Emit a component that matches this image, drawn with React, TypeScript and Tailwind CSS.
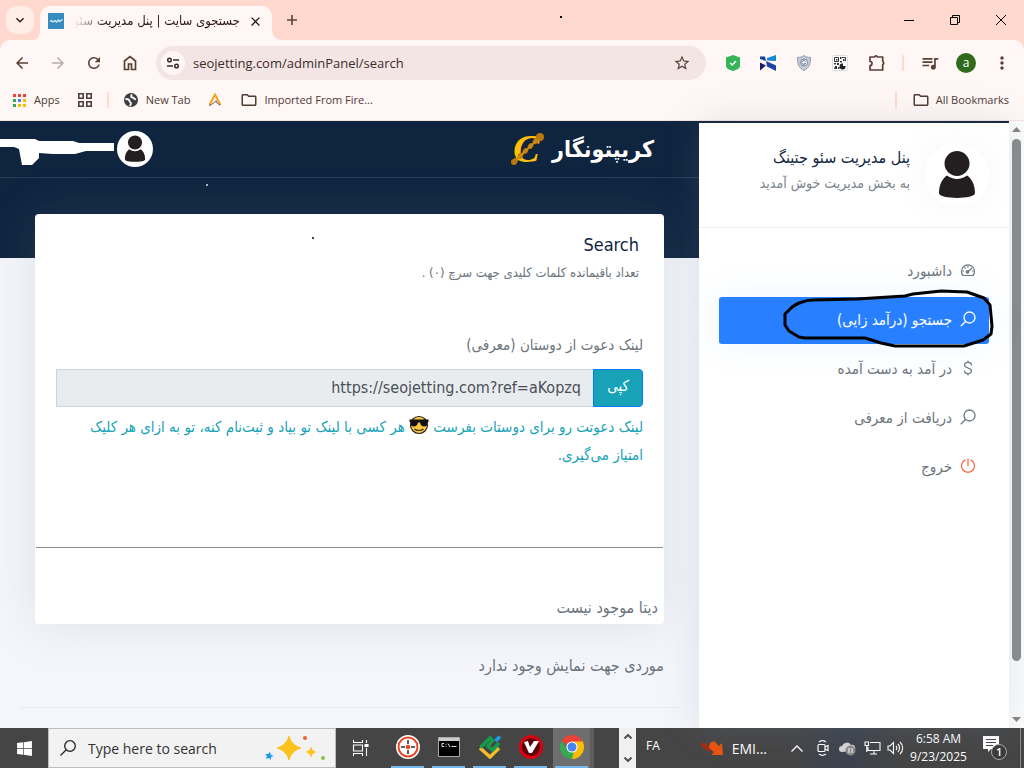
import type { ReactNode } from "react";
import {
  MdArrowBack,
  MdArrowForward,
  MdClose,
  MdKeyboardArrowDown,
  MdMoreVert,
  MdOutlineFolder,
  MdQueueMusic,
  MdRefresh,
  MdStarBorder,
} from "react-icons/md";
import { FaWindows } from "react-icons/fa";

const persian = "font-['DejaVu_Sans_Condensed','DejaVu_Sans',sans-serif]";

function WindowControls() {
  return (
    <div className="ml-auto flex h-full items-center">
      <button aria-label="Minimize" className="flex h-full w-[46px] items-center justify-center">
        <svg width="10" height="10" viewBox="0 0 10 10" stroke="#000" fill="none"><path d="M0 5.5h10" /></svg>
      </button>
      <button aria-label="Restore" className="flex h-full w-[46px] items-center justify-center">
        <svg width="10" height="10" viewBox="0 0 10 10" stroke="#000" fill="none"><path d="M.5 2.5h7v7h-7zM2.5 2.5v-2h7v7h-2" /></svg>
      </button>
      <button aria-label="Close" className="flex h-full w-[46px] items-center justify-center">
        <svg width="10" height="10" viewBox="0 0 10 10" stroke="#000" fill="none"><path d="M0 0l10 10M10 0L0 10" /></svg>
      </button>
    </div>
  );
}

function TabStrip() {
  return (
    <div className="relative flex h-10 items-center bg-[#ffd9ce]">
      <button aria-label="Search tabs" className="ml-1.5 flex size-7 items-center justify-center rounded-[10px] bg-[#ffede8] text-[#2b1712]">
        <MdKeyboardArrowDown size={16} />
      </button>
      <svg className="self-end" width="6" height="10" viewBox="0 0 6 10"><path d="M6 0v10H0c4 0 6-4 6-10" fill="#fff7f5" /></svg>
      <div className="flex h-[34px] w-[232px] items-center self-end rounded-t-[10px] bg-[#fff7f5] px-2 pb-2 pt-1">
        <svg width="16" height="16" viewBox="0 0 16 16" className="shrink-0">
          <path d="M0 0h16v16H0z" fill="#378cbf" />
          <path d="M2 8.500l1.500-1 1.500 1.500 2-1.500 1.500 1.500 2-2 1 1.500 3-2" stroke="#d9ecf5" strokeWidth="1.300" fill="none" />
        </svg>
        <div dir="rtl" className={`ml-2.5 w-[166px] overflow-hidden whitespace-nowrap text-[13px] leading-5 text-[#2b1712] [mask-image:linear-gradient(to_right,transparent,#000_32px)] ${persian}`}>
          جستجوی سایت | پنل مدیریت سئو
        </div>
        <button aria-label="Close tab" className="ml-2 text-[#2b1712]"><MdClose size={15} /></button>
      </div>
      <svg className="self-end" width="10" height="10" viewBox="0 0 10 10"><path d="M0 0v10h10C4 10 0 6 0 0" fill="#fff7f5" /></svg>
      <button aria-label="New tab" className="ml-1 text-[#5b4039]">
        <svg width="12" height="12" viewBox="0 0 12 12" stroke="currentColor" strokeWidth="1.600"><path d="M6 1v10M1 6h10" /></svg>
      </button>
      <span className="absolute left-[560px] top-4 size-0.5 bg-black" />
      <WindowControls />
    </div>
  );
}

function Extensions() {
  return (
    <div className="ml-5 flex items-center text-[#5b3f37]">
      <svg width="14" height="16" viewBox="0 0 14 16"><path d="M7 0l7 2.500V11c0 2-3 4-7 5-4-1-7-3-7-5V2.500z" fill="#35b558" /><path d="M4 8l2.200 2L10 6" stroke="#fff" strokeWidth="1.600" fill="none" /></svg>
      <svg className="ml-5" width="16" height="16" viewBox="0 0 16 16">
        <path d="M0 1.500h5L6 6l-6-2z" fill="#1b3fa0" />
        <path d="M16 0v6L7 5.500V3z" fill="#1487d8" />
        <path d="M6 6l10 4.500V16L7 11.500z" fill="#20429f" />
        <path d="M0 7.500l6 3-6 5z" fill="#1b1f6b" />
      </svg>
      <svg className="ml-5" width="16" height="16" viewBox="0 0 16 16">
        <path d="M8 .5c2 1.500 4 2 6.500 2 0 6-1 10.500-6.500 13C2.500 13 1.500 8.500 1.500 2.500 4 2.500 6 2 8 .5z" fill="#c5cbd5" stroke="#939dac" />
        <circle cx="8" cy="7.500" r="3.500" fill="#e9ecf2" stroke="#7f8ba2" /><path d="M9.500 6.500a2 2 0 1 0 0 2H8" stroke="#7f8ba2" fill="none" />
      </svg>
      <svg className="ml-5" width="16" height="16" viewBox="0 0 16 16">
        <rect x=".5" y=".5" width="15" height="15" rx="1.500" fill="#fff" stroke="#ddd" />
        <path d="M2.500 2.500h4v4h-4zM10 2.500h3.500v3.500" fill="none" stroke="#333" />
        <path d="M4 4h1.500v1.500H4zM8 2h1.500v2H8zM11 4h1.500v2H11zM8 6h2v1.500H8zM2 8h2v1.500H2zM5 8h2v2H5zM3 11h2v3H2zM6 12h1.500v2H6z" fill="#333" />
        <path d="M11 8.500V11h2.500A3 3 0 1 1 11 8.500z" fill="#222" />
      </svg>
      <button aria-label="Extensions" className="ml-5">
        <svg width="18" height="18" viewBox="0 0 18 18" fill="none" stroke="currentColor" strokeWidth="1.700" strokeLinejoin="round">
          <path d="M2 3h4.500a1.600 1.600 0 0 1 3 0h5.200v4.500a1.600 1.600 0 0 1 0 3V16H2v-4.500a2 2 0 0 0 0-4z" />
        </svg>
      </button>
      <span className="ml-4 h-4 w-0.5 rounded bg-[#ffd9ce]" />
      <button aria-label="Media controls" className="ml-4"><MdQueueMusic size={20} /></button>
      <button className="ml-4 flex size-5 items-center justify-center rounded-full bg-[#2f6a1d] text-[12px] leading-none text-white">a</button>
      <button aria-label="Menu" className="ml-4 mr-3"><MdMoreVert size={20} /></button>
    </div>
  );
}

function Toolbar() {
  return (
    <div className="flex h-[46px] items-center rounded-t-[10px] bg-[#fff7f5] pl-[13px] text-[#5b3f37]">
      <button aria-label="Back"><MdArrowBack size={18} /></button>
      <button aria-label="Forward" className="ml-[18px] text-[#bcaca8]"><MdArrowForward size={18} /></button>
      <button aria-label="Reload" className="ml-[18px]"><MdRefresh size={18} /></button>
      <button aria-label="Home" className="ml-[18px]">
        <svg width="18" height="18" viewBox="0 0 18 18" fill="none" stroke="currentColor" strokeWidth="1.700"><path d="M3.500 7L9 2.500 14.500 7v8.500h-4V10h-3v5.500h-4z" /></svg>
      </button>
      <div className="ml-[17px] flex h-[34px] flex-1 items-center rounded-full bg-[#f2e5e4] pl-[5px] pr-[15px]">
        <button aria-label="Site information" className="flex size-6 items-center justify-center rounded-full bg-[#fff7f5]">
          <svg width="14" height="14" viewBox="0 0 14 14" fill="none" stroke="#3b2823" strokeWidth="1.500"><circle cx="3.500" cy="4" r="1.800" /><path d="M7 4h6M1 10h6" /><circle cx="10.500" cy="10" r="1.800" /></svg>
        </button>
        <input aria-label="Address" readOnly value="seojetting.com/adminPanel/search" className="ml-2 min-w-0 flex-1 bg-transparent text-[13px] leading-5 text-[#3b2d2a] outline-none" />
        <button aria-label="Bookmark this tab"><MdStarBorder size={18} /></button>
      </div>
      <Extensions />
    </div>
  );
}

const appDots = ["#ea4335", "#ea4335", "#ea4335", "#34a853", "#4285f4", "#fbbc04", "#34a853", "#fbbc04", "#fbbc04"];

function Bookmarks() {
  return (
    <nav className="flex h-[35px] items-center border-b border-[#f3e3df] bg-[#fff7f5] pb-1.5 pl-[13px] pr-[15px] text-[11px] text-[#4f3a35]">
      <a href="#apps" className="flex items-center gap-2">
        <svg width="13" height="13" viewBox="0 0 13 13">{appDots.map((c, i) => <rect key={i} x={(i % 3) * 5} y={Math.floor(i / 3) * 5} width="3" height="3" fill={c} />)}</svg>
        Apps
      </a>
      <svg className="ml-[18px]" width="14" height="14" viewBox="0 0 14 14" fill="none" stroke="currentColor" strokeWidth="1.600"><path d="M.8.8h4.400v4.400H.8zM8.800.8h4.400v4.400H8.800zM.8 8.800h4.400v4.400H.8zM8.800 8.800h4.400v4.400H8.800z" /></svg>
      <span className="ml-[15px] h-4 w-0.5 rounded bg-[#ffd9ce]" />
      <a href="#new" className="ml-[15px] flex items-center gap-2">
        <svg width="14" height="14" viewBox="0 0 14 14"><circle cx="7" cy="7" r="7" fill="#3c4043" /><path d="M1.500 6c2 0 4 .5 4 2s1.500 1 1.500 2.500L6 13M8 1.500C6.500 3 7 4.500 8.500 4.500S10 6 12 6.500" stroke="#fff7f5" strokeWidth="1.800" fill="none" /></svg>
        New Tab
      </a>
      <svg className="ml-[18px]" width="14" height="14" viewBox="0 0 14 14" fill="none"><path d="M1.500 12L7 1.500 12.500 12" stroke="#f9a11b" strokeWidth="2" /><path d="M1 12.500c4-1 5-4 8-4.500M8 9l4 3" stroke="#5c5a6b" /></svg>
      <a href="#imported" className="ml-[18px] flex items-center gap-1.5"><MdOutlineFolder size={18} />Imported From Fire...</a>
      <span className="ml-auto h-4 w-0.5 rounded bg-[#ffd9ce]" />
      <a href="#all" className="ml-[15px] flex items-center gap-1.5"><MdOutlineFolder size={18} />All Bookmarks</a>
    </nav>
  );
}

function Avatar({ size }: { size: number }) {
  return (
    <svg width={size} height={size} viewBox="0 0 64 64" role="img" aria-label="user">
      <circle cx="32" cy="32" r="32" fill="#fff" />
      <circle cx="32" cy="20.500" r="12.500" fill="#231f20" />
      <path d="M22 32.500c6 4.500 14 4.500 20 0 5 3 8 10 8 17.500 0 6.500-36 6.500-36 0 0-7.500 3-14.500 8-17.500z" fill="#231f20" />
    </svg>
  );
}

function Logo() {
  return (
    <a href="#home" dir="ltr" className="flex items-center gap-1.5 text-white">
      <svg width="36" height="48" viewBox="0 0 36 48">
        <text x="3" y="37" fontSize="40" fontWeight="700" fontStyle="italic" fontFamily="Liberation Serif" fill="#fdbf07">C</text>
        <path d="M5 36L30 12" stroke="#b9780d" strokeWidth="5" strokeLinecap="round" strokeDasharray="1 6" />
        <path d="M5 36L30 12" stroke="#d08c12" strokeWidth="2" />
        <circle cx="30" cy="12" r="4" fill="#b9780d" /><circle cx="4" cy="37" r="3" fill="#b9780d" />
      </svg>
      <span dir="rtl" className={`text-[23px] font-bold leading-8 ${persian}`}>کریپتونگار</span>
    </a>
  );
}

function CoolFace() {
  return (
    <svg className="inline-block align-[-3px]" width="20" height="20" viewBox="0 0 20 20" role="img" aria-label="cool face">
      <circle cx="10" cy="10" r="8.500" fill="#ffc83d" stroke="#222" strokeWidth="1.200" />
      <path d="M.5 4.500h19v2.500l-1 .5c0 3-1.500 4-3.500 4s-3.500-1.500-4-4H9c-.5 2.500-2 4-4 4s-3.500-1-3.500-4l-1-.5z" fill="#111" />
      <path d="M5.500 14c2.500 2 6.500 2 9 0" stroke="#222" strokeWidth="1.200" fill="none" />
    </svg>
  );
}

function MainPanel() {
  return (
    <main className="relative min-w-0 flex-1 overflow-hidden bg-[#f5f6fb]">
      <div className="h-[137px] bg-[#0f243f]">
        <header className="flex h-[57px] items-center border-b border-[#2a3b57] pr-[45px]">
          <svg width="117" height="34" viewBox="0 0 117 34" fill="#fff"><path d="M0 7h35l4 2h34l6 2h35v8H86l-11 3H53l-14-1v5l-7 7H22l-3-16-5-2H0z" /></svg>
          <Avatar size={36} />
          <div className="ml-auto"><Logo /></div>
        </header>
      </div>
      <section dir="rtl" className={`relative mx-[35px] -mt-11 h-[410px] rounded bg-white text-[#6c757d] shadow-[0_0_50px_rgba(120,135,160,0.18)] ${persian}`}>
        <div className="px-[25px] pt-[19px]">
          <h1 className="text-[18px] leading-6 text-[#0f243f]">Search</h1>
          <p className="mt-1 text-[13px] leading-6">تعداد باقیمانده کلمات کلیدی جهت سرچ (۰) .</p>
        </div>
        <div className="px-[21px] pt-12 text-[15px]">
          <label htmlFor="invite" className="block leading-6">لینک دعوت از دوستان (معرفی)</label>
          <div className="mt-3 flex h-[38px]">
            <button className="w-[50px] rounded-r border border-[#007bff] bg-[#17a2b8] pb-1 text-white">کپی</button>
            <input id="invite" dir="ltr" readOnly value="https://seojetting.com?ref=aKopzq" className="min-w-0 flex-1 border border-r-0 border-[#ced4da] bg-[#e9ecef] px-3 text-right text-[16px] text-[#495057] outline-none" />
          </div>
          <p className="mt-1.5 leading-7 text-[#17a2b8]">
            لینک دعوتت رو برای دوستات بفرست <CoolFace /> هر کسی با لینک تو بیاد و ثبت‌نام کنه، تو به ازای هر کلیک
            <br />
            امتیاز می‌گیری.
          </p>
        </div>
        <hr className="mx-px mt-[78px] border-[#8c8c8c]" />
        <p className="pr-1.5 pt-12 text-[16px] leading-6">دیتا موجود نیست</p>
      </section>
      <p dir="rtl" className={`mr-[35px] mt-[30px] text-[16px] leading-6 text-[#6c757d] ${persian}`}>موردی جهت نمایش وجود ندارد</p>
      <hr className="mx-5 mt-[29px] border-[#e9eaf0]" />
      <span className="absolute left-[206px] top-[63px] size-0.5 bg-[#a9b2bf]" />
      <span className="absolute left-[312px] top-[116px] size-0.5 bg-[#444]" />
    </main>
  );
}

const searchIcon = <svg width="16" height="16" viewBox="0 0 16 16" fill="none" stroke="currentColor" strokeWidth="1.300"><circle cx="9.500" cy="6.500" r="5.500" /><path d="M5.500 10.500L.8 15.200" /></svg>;

const menu: { label: string; icon: ReactNode; active?: boolean; danger?: boolean }[] = [
  {
    label: "داشبورد",
    icon: <svg width="16" height="16" viewBox="0 0 16 16" fill="none" stroke="currentColor" strokeWidth="1.200"><path d="M3 13.500a6.500 6.500 0 1 1 10 0zM4 9H2.500M4.500 5.500l1 1M8 4v1.500M13.500 9H12" /><path d="M7 10.500L12 6" /><circle cx="7.500" cy="9.800" r="1.300" /></svg>,
  },
  { label: "جستجو (درآمد زایی)", icon: searchIcon, active: true },
  {
    label: "در آمد به دست آمده",
    icon: <svg width="16" height="16" viewBox="0 0 16 16" fill="none" stroke="currentColor" strokeWidth="1.200"><path d="M11.500 5.500c0-4-7-4-7-.5s7 2.500 7 6-7 3.500-7-.5M8 .5v2M8 13.500v2" /></svg>,
  },
  { label: "دریافت از معرفی", icon: searchIcon },
  {
    label: "خروج",
    danger: true,
    icon: <svg width="16" height="16" viewBox="0 0 16 16" fill="none" stroke="currentColor" strokeWidth="1.300"><path d="M5.500 1.800a6.500 6.500 0 1 0 5 0M8 .5V8" /></svg>,
  },
];

function Sidebar() {
  return (
    <aside dir="rtl" className={`relative mt-0.5 w-[310px] shrink-0 bg-white shadow-[0_0_35px_rgba(120,135,160,0.2)] ${persian}`}>
      <div className="flex h-[105px] items-center border-b border-[#f1f1f3] pr-5">
        <div className="rounded-full shadow-[0_0_35px_rgba(120,135,160,0.08)]"><Avatar size={64} /></div>
        <div className="pb-2.5 pr-[15px]">
          <h2 className="text-[16px] leading-[26px] text-[#12263f]">پنل مدیریت سئو جتینگ</h2>
          <p className="text-[14px] leading-6 text-[#7b838c]">به بخش مدیریت خوش آمدید</p>
        </div>
      </div>
      <nav className="relative mx-5 mt-5 flex flex-col gap-0.5">
        {menu.map((item) => (
          <a
            key={item.label}
            href="#menu"
            className={`flex h-[47px] items-center gap-2 rounded-[3px] px-[13px] text-[15px] ${item.active ? "bg-[#287fff] text-white shadow-[0_0_40px_rgba(40,127,255,0.08)]" : "text-[#6c757d]"}`}
          >
            <span className={`pb-1 ${item.danger ? "text-[#f96a4b]" : ""}`}>{item.icon}</span>
            {item.label}
          </a>
        ))}
        {/* hand-drawn loop round the active entry */}
        <svg className="absolute -right-1.5 top-[38px] overflow-visible" width="214" height="60" viewBox="0 0 214 60" fill="none" stroke="#000" strokeWidth="3" strokeLinejoin="round">
          <path d="M76 13L32 14C24 14 14 18 10 22L4 28V39L8 45 18 51 24 52H84L100 57 114 60H183L202 54 210 48 211 40 209 19 203 12 186 6 160 5 132 8 124 10z" />
        </svg>
      </nav>
    </aside>
  );
}

function ScrollBar() {
  return (
    <div className="flex w-[15px] shrink-0 flex-col items-center justify-between bg-[#fcfcfc] pb-1.5 pt-1.5">
      <svg width="9" height="5" viewBox="0 0 9 5" fill="#858585"><path d="M0 5l4.500-5L9 5z" /></svg>
      <div className="mb-14 mt-[7px] w-[9px] flex-1 rounded-full bg-[#8b8b8b]" />
      <svg width="9" height="5" viewBox="0 0 9 5" fill="#858585"><path d="M0 0l4.500 5L9 0z" /></svg>
    </div>
  );
}

const apps: { name: string; icon: ReactNode }[] = [
  {
    name: "Snipping target",
    icon: <svg width="24" height="24" viewBox="0 0 24 24"><circle cx="12" cy="12" r="12" fill="#fff" /><circle cx="12" cy="12" r="9.500" fill="none" stroke="#e8472b" strokeWidth="2" /><path d="M12 5v4M12 15v4M5 12h4M15 12h4" stroke="#333" strokeWidth="1.600" /><circle cx="12" cy="12" r="2.200" fill="#f0441f" /></svg>,
  },
  {
    name: "Command Prompt",
    icon: <svg width="22" height="20" viewBox="0 0 22 20"><path d="M.5.5h21v19H.5z" fill="#000" stroke="#aaa" /><path d="M1 1h20v3H1z" fill="#c9ced3" /><path d="M6 6.500H4v3h2M8 7v.8M8 9v.8M10 6.500l2 3.500M13.500 9.500h5" stroke="#ddd" fill="none" /></svg>,
  },
  {
    name: "LiteFinance",
    icon: <svg width="24" height="24" viewBox="0 0 24 24" fill="none"><path d="M2 13l10 9 9-9" stroke="#f2bd2b" strokeWidth="3.500" /><path d="M2.500 12.500L12 3l2.500 2.500L10 11l4.500 4 6.500-7" stroke="#159b4c" strokeWidth="3.500" /><path d="M17.500 6L22 1.500" stroke="#1c9be6" strokeWidth="3.500" /></svg>,
  },
  {
    name: "V client",
    icon: <svg width="24" height="24" viewBox="0 0 24 24"><circle cx="12" cy="12" r="12" fill="#d90010" /><circle cx="12" cy="12" r="9" fill="#5b0008" /><path d="M5 7l4-1 2 6 4-6h5l-7 12H10z" fill="#fff" /></svg>,
  },
  {
    name: "Google Chrome",
    icon: (
      <svg width="24" height="24" viewBox="0 0 24 24">
        <path d="M12 12L1.600 6a12 12 0 0 1 20.800 0z" fill="#ea4335" />
        <path d="M12 12L22.400 6A12 12 0 0 1 12 24z" fill="#fbbc04" />
        <path d="M12 24A12 12 0 0 1 1.600 6L7 15l8 3z" fill="#34a853" />
        <path d="M12 6.500h10.700L17 15l-5 9 2-8z" fill="#fbbc04" />
        <circle cx="12" cy="12" r="5.600" fill="#fff" /><circle cx="12" cy="12" r="4.500" fill="#4285f4" />
      </svg>
    ),
  },
];

function Taskbar() {
  return (
    <footer className="flex h-10 shrink-0 items-stretch bg-[#454545] text-[12px] text-white">
      <button aria-label="Start" className="flex w-12 items-center justify-center"><FaWindows size={17} /></button>
      <label className="flex w-[288px] items-center border border-[#bdbdbd] bg-[#f2f2f2] pl-[11px] pr-2.5 text-[#222]">
        <svg className="shrink-0" width="16" height="16" viewBox="0 0 16 16" fill="none" stroke="currentColor" strokeWidth="1.300"><circle cx="10" cy="6" r="5.300" /><path d="M6 10L.5 15.500" /></svg>
        <input placeholder="Type here to search" className="ml-3 min-w-0 flex-1 bg-transparent text-[14px] outline-none placeholder:text-[#333]" />
        <svg className="shrink-0" width="60" height="26" viewBox="0 0 60 26">
          <path d="M24 1c1.500 6 5.500 10 12 12-6.500 2-10.500 6-12 12-1.500-6-5.500-10-12-12 6.500-2 10.500-6 12-12z" fill="#fcc21b" stroke="#fcc21b" strokeLinejoin="round" />
          <path d="M46 11c1 4 2 5 6 6-4 1-5 2-6 6-1-4-2-5-6-6 4-1 5-2 6-6z" fill="#fcc21b" />
          <path d="M5 17l1 3 3 1-3 1v3l-2-2-3 1 1-3-2-2h3z" fill="#1b9be8" />
          <circle cx="40" cy="3" r="2" fill="#f0622d" /><circle cx="58" cy="23" r="2" fill="#86c440" />
        </svg>
      </label>
      <button aria-label="Task View" className="flex w-12 items-center justify-center">
        <svg width="17" height="16" viewBox="0 0 17 16" fill="none" stroke="#fff" strokeWidth="1.100"><path d="M1.500 0v2.500h9V0M1.500 5h9v6h-9zM1.500 16v-2.500h9V16M14.500 0v3M14.500 8v8" /><path d="M13 4.500h3v2h-3z" fill="#fff" /></svg>
      </button>
      <div className="flex pl-[5px]">
        {apps.map((app, i) => (
          <button key={app.name} aria-label={app.name} className={`flex w-[41px] items-center justify-center border-r-4 ${i === 4 ? "border-[#5d5d5d] bg-[#6e6e6e]" : "border-transparent"}`}>
            <span className="flex h-full w-[33px] items-center justify-center border-b-2 border-[#76b9ed]">{app.icon}</span>
          </button>
        ))}
      </div>
      <div className="ml-[25px] flex w-[17px] flex-col items-center justify-between bg-[#f0f0f0] py-1.5">
        <svg width="8" height="5" viewBox="0 0 8 5" fill="none" stroke="#505050" strokeWidth="2"><path d="M.5 4.500L4 1l3.500 3.500" /></svg>
        <svg width="8" height="5" viewBox="0 0 8 5" fill="none" stroke="#505050" strokeWidth="2"><path d="M.5.5L4 4 7.500.5" /></svg>
      </div>
      <button className="ml-2.5 pb-1">FA</button>
      <button className="ml-auto flex items-center gap-2 text-[14px]">
        <svg width="24" height="14" viewBox="0 0 24 14"><path d="M0 4l4-3 4 4 5-4 2 5-6 5z" fill="#a32c12" /><path d="M10 2l4-2 5 5 3-3 1 12H11l3-3-5-4z" fill="#e8540f" /></svg>
        EMI...
      </button>
      <div className="ml-5 flex items-center bg-linear-to-r from-[#454545] via-[#3c434e] to-[#454545] pl-1">
        <svg width="12" height="7" viewBox="0 0 12 7" fill="none" stroke="#fff" strokeWidth="1.300"><path d="M.5 6.500L6 1l5.500 5.500" /></svg>
        <svg className="ml-3.5" width="12" height="16" viewBox="0 0 12 16" fill="none" stroke="#fff" strokeWidth="1.200"><rect x="1" y="4.500" width="7" height="7" rx="1" /><path d="M8 7l3-1.500v5L8 9M2 2c2-1.500 5-1.500 7 0M2 14c2 1.500 5 1.500 7 0" /></svg>
        <svg className="ml-2.5" width="17" height="16" viewBox="0 0 17 16"><path d="M3 12a3 3 0 0 1 0-6 5 5 0 0 1 9-1 3 3 0 0 1 2 6z" fill="#d4d4d4" /><circle cx="11.500" cy="10.500" r="5" fill="#8a8a8a" /><path d="M10 8v5M13 8v5" stroke="#fff" /></svg>
        <svg className="ml-2" width="17" height="14" viewBox="0 0 17 14" fill="none" stroke="#fff" strokeWidth="1.100"><path d="M6 1.500h10v8H4V6M10 9.500V13M6 13h7M1 1h3.500v3.500H1zM2.800 4.500V11" /></svg>
        <svg className="ml-1.5" width="17" height="14" viewBox="0 0 17 14" fill="none" stroke="#fff" strokeWidth="1.100"><path d="M1 5v4h2l3.500 3.500v-11L3 5zM9 5c1 1 1 3 0 4M11 3c2 2 2 6 0 8M13 1c3.500 3 3.500 9 0 12" /></svg>
      </div>
      <button className="ml-1.5 w-[57px] whitespace-nowrap text-center leading-[18px]">6:58 AM<br />9/23/2025</button>
      <button aria-label="1 new notification" className="ml-4 flex items-center">
        <svg width="25" height="26" viewBox="0 0 25 26">
          <path d="M0 1h16v13H8l-3 3v-3H0z" fill="#fff" /><path d="M3 4.500h10M3 7.500h10M3 10.500h7" stroke="#454545" />
          <circle cx="16" cy="17" r="7.500" fill="#3b3b3b" stroke="#aaa" /><text x="13" y="21" fontSize="11" fontWeight="600" fill="#fff" fontFamily="Open Sans">1</text>
        </svg>
      </button>
      <span className="ml-3 mr-[3px] w-px bg-[#8a8a8a]" />
    </footer>
  );
}

export default function App() {
  return (
    <div className="flex h-screen flex-col overflow-hidden bg-[#ffd9ce] font-['Open_Sans',sans-serif]">
      <TabStrip />
      <Toolbar />
      <Bookmarks />
      <div className="flex min-h-0 flex-1 bg-[#0f243f]">
        <MainPanel />
        <Sidebar />
        <ScrollBar />
      </div>
      <Taskbar />
    </div>
  );
}
